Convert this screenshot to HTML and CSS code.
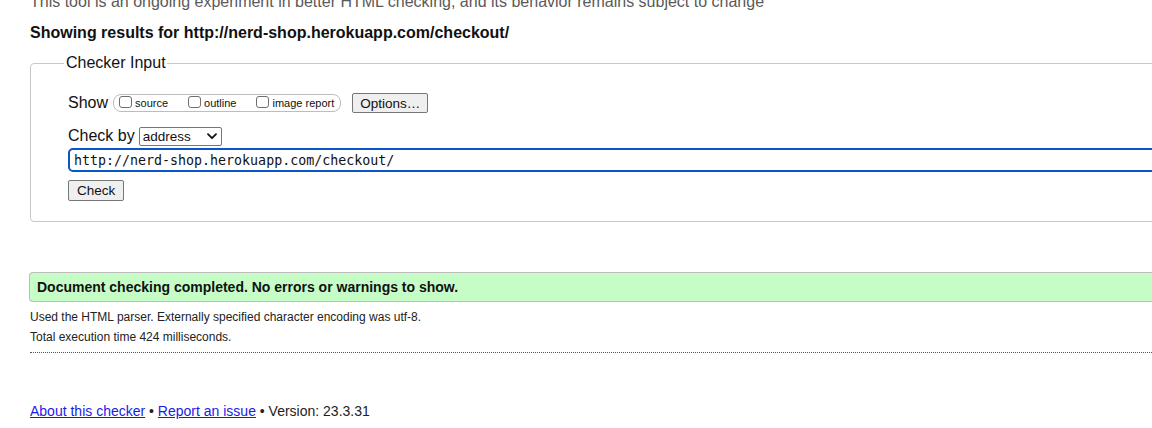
FILE: index.html
```html
<!DOCTYPE html>
<html lang="en">
<head>
<meta charset="utf-8">
<title>Nu Html Checker</title>
<link rel="stylesheet" href="styles.css">
</head>
<body>
<div class="page">
  <p class="intro">This tool is an ongoing experiment in better HTML checking, and its behavior remains subject to change</p>
  <p class="results-for">Showing results for http://nerd-shop.herokuapp.com/checkout/</p>
  <fieldset class="checker">
    <legend>Checker Input</legend>
    <div class="row show-row">
      <span class="label">Show</span>
      <span class="opts">
        <label class="opt"><input type="checkbox" class="cb"><span>source</span></label>
        <label class="opt"><input type="checkbox" class="cb"><span>outline</span></label>
        <label class="opt"><input type="checkbox" class="cb"><span>image report</span></label>
      </span>
      <button class="btn options">Options…</button>
    </div>
    <div class="row by-row">
      <span class="label">Check by</span>
      <span class="select-wrap">
        <select class="select"><option>address</option></select>
        <svg class="chev" width="10" height="7" viewBox="0 0 10 7"><path d="M1 1.2 L5 5.2 L9 1.2" fill="none" stroke="#111" stroke-width="1.8" stroke-linecap="round" stroke-linejoin="round"/></svg>
      </span>
    </div>
    <div class="row url-row">
      <input class="url" type="text" value="http://nerd-shop.herokuapp.com/checkout/">
    </div>
    <div class="row check-row">
      <button class="btn check">Check</button>
    </div>
  </fieldset>
  <div class="success">Document checking completed. No errors or warnings to show.</div>
  <p class="meta">Used the HTML parser. Externally specified character encoding was utf-8.</p>
  <p class="meta">Total execution time 424 milliseconds.</p>
  <div class="dots"></div>
  <p class="footer"><a href="#">About this checker</a> • <a href="#">Report an issue</a> • Version: 23.3.31</p>
</div>
</body>
</html>
```

FILE: styles.css
```css
html, body {
  margin: 0;
  padding: 0;
  overflow: hidden;
  background: #fff;
}
body {
  font-family: "Liberation Sans", Arial, sans-serif;
  color: #111;
}
.page {
  width: 1300px;
  padding-left: 30px;
}
.intro {
  margin: -7px 0 0;
  font-size: 16px;
  line-height: 18px;
  color: #5a5a5a;
}
.results-for {
  margin: 13px 0 0;
  font-size: 16px;
  line-height: 18px;
  font-weight: bold;
  color: #111;
}
.checker {
  margin: 12px 0 0;
  border: 1px solid #c8c8c8;
  border-radius: 4px;
  padding: 0 0 20px 37px;
  min-width: 0;
}
.checker legend {
  margin-left: -4px;
  padding: 0 1px 0 2px;
  font-size: 16px;
  line-height: 18px;
  color: #111;
}
.row {
  display: flex;
  align-items: center;
}
.label {
  font-size: 16px;
  color: #111;
}
.show-row {
  margin-top: 21px;
  height: 20px;
}
.opts {
  display: flex;
  align-items: center;
  margin-left: 5px;
  height: 16px;
  border: 1px solid #bdbdbd;
  border-radius: 8px;
  padding: 0 6px 0 5px;
  gap: 20px;
}
.opt {
  display: flex;
  align-items: center;
  font-size: 11px;
  color: #111;
}
.cb {
  appearance: none;
  -webkit-appearance: none;
  width: 13px;
  height: 12px;
  margin: 0 3px 2px 0;
  border: 1px solid #6f6f6f;
  border-radius: 3px;
  background: #fff;
}
.btn {
  font-family: "Liberation Sans", Arial, sans-serif;
  font-size: 13.5px;
  color: #111;
  background: #efefef;
  border: 1px solid #767676;
  border-radius: 2px;
  padding: 0 7px;
}
.options {
  margin-left: 11px;
  height: 20px;
}
.by-row {
  margin-top: 13px;
  height: 20px;
}
.select-wrap {
  position: relative;
  display: inline-block;
  margin-left: 4px;
}
.select {
  appearance: none;
  -webkit-appearance: none;
  width: 83px;
  height: 19px;
  font-family: "Liberation Sans", Arial, sans-serif;
  font-size: 13.5px;
  color: #111;
  background: #fff;
  border: 1px solid #767676;
  border-radius: 2px;
  padding: 0 0 0 3px;
  display: block;
}
.chev {
  position: absolute;
  right: 5px;
  top: 6px;
}
.url-row {
  margin-top: 2px;
}
.url {
  width: 1200px;
  height: 24px;
  box-sizing: border-box;
  border: 2px solid #0a55c8;
  border-radius: 5px;
  padding: 0 4px;
  font-family: "DejaVu Sans Mono", "Liberation Mono", monospace;
  font-size: 13.3px;
  color: #111;
  outline: none;
}
.check-row {
  margin-top: 8px;
}
.check {
  height: 21px;
  padding: 0 8px;
}
.success {
  margin-top: 50px;
  margin-left: -1px;
  height: 28px;
  line-height: 28px;
  background: #c6fdc6;
  border: 1px solid #bdbdbd;
  border-right: none;
  border-radius: 4px 0 0 4px;
  padding-left: 7px;
  font-size: 14px;
  font-weight: bold;
  color: #111;
}
.meta {
  margin: 0;
  font-size: 12px;
  line-height: 20px;
  color: #222;
}
.success + .meta {
  margin-top: 5px;
}
.dots {
  margin-top: 5px;
  border-top: 1px dotted #555;
}
.footer {
  margin: 50px 0 0;
  font-size: 14px;
  color: #222;
}
.footer a {
  color: #1a1ae6;
}
```
